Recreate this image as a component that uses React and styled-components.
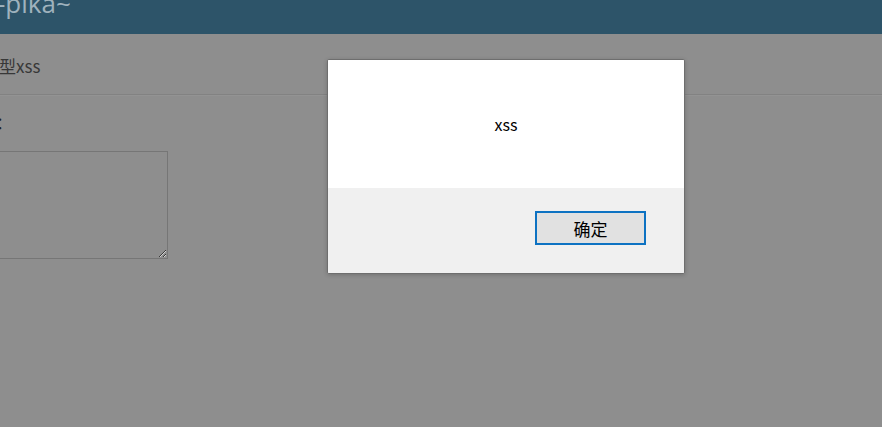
import React from "react";
import styled, { createGlobalStyle } from "styled-components";

const Global = createGlobalStyle`
  html, body { margin: 0; padding: 0; background: #8e8e8e; overflow: hidden; }
  body { font-family: "Open Sans", "Noto Sans CJK SC", sans-serif; }
  #root { min-height: 427px; }
`;

const Page = styled.div`
  width: 882px;
  height: 427px;
  overflow: hidden;
  background: #8e8e8e;
  display: flex;
  flex-direction: column;
`;

const Header = styled.header`
  height: 34px;
  background: #2d5469;
  display: flex;
  align-items: flex-start;
  overflow: hidden;
  flex-shrink: 0;
`;

const Brand = styled.div`
  margin-top: -10px;
  margin-left: -3px;
  font-family: "Open Sans", sans-serif;
  font-size: 26px;
  line-height: 26px;
  color: #9fb2bd;
  white-space: nowrap;
`;

const Breadcrumbs = styled.div`
  height: 60px;
  border-bottom: 1px solid #828282;
  box-shadow: 0 1px 0 #939393;
  display: flex;
  align-items: center;
  margin-bottom: 5px;
  flex-shrink: 0;
`;

const Crumb = styled.span`
  margin-left: -35px;
  margin-top: 2px;
  font-family: "Noto Sans CJK SC", sans-serif;
  font-size: 17px;
  color: #383838;
  white-space: nowrap;
`;

const Content = styled.div`
  display: flex;
  flex-direction: column;
  align-items: flex-start;
`;

const Label = styled.div`
  margin-left: -116px;
  margin-top: 10px;
  font-family: "Noto Sans CJK SC", sans-serif;
  font-size: 16px;
  line-height: 24px;
  color: #222;
  white-space: nowrap;
`;

const MessageBox = styled.textarea`
  margin-left: -120px;
  margin-top: 17px;
  width: 288px;
  height: 108px;
  box-sizing: border-box;
  border: 1px solid #767676;
  background: #8e8e8e;
  outline: none;
  padding: 4px;
`;

const Dialog = styled.div`
  position: fixed;
  left: 327px;
  top: 59px;
  width: 358px;
  height: 215px;
  box-sizing: border-box;
  border: 1px solid #6e6e6e;
  border-radius: 2px;
  background: #f0f0f0;
  box-shadow: 0 1px 4px rgba(0, 0, 0, 0.2);
  display: flex;
  flex-direction: column;
  overflow: hidden;
`;

const Body = styled.div`
  height: 128px;
  background: #ffffff;
  display: flex;
  align-items: center;
  justify-content: center;
  font-family: "Noto Sans CJK SC", sans-serif;
  font-size: 16px;
  color: #000;
  box-sizing: border-box;
`;

const Footer = styled.div`
  flex: 1;
  background: #f0f0f0;
  display: flex;
  justify-content: flex-end;
  align-items: flex-start;
  padding: 23px 38px 0 0;
`;

const Button = styled.button`
  width: 111px;
  height: 34px;
  box-sizing: border-box;
  border: 2px solid #0d72c2;
  background: #e1e1e1;
  font-family: "Noto Sans CJK SC", sans-serif;
  font-size: 17px;
  color: #000;
  padding: 0;
  cursor: default;
`;

export default function App() {
  return (
    <>
      <Global />
      <Page>
        <Header>
          <Brand>-pika~</Brand>
        </Header>
        <Breadcrumbs>
          <Crumb>存储型xss</Crumb>
        </Breadcrumbs>
        <Content>
          <Label>我是一个留言板：</Label>
          <MessageBox />
        </Content>
      </Page>
      <Dialog>
        <Body>xss</Body>
        <Footer>
          <Button>确定</Button>
        </Footer>
      </Dialog>
    </>
  );
}
